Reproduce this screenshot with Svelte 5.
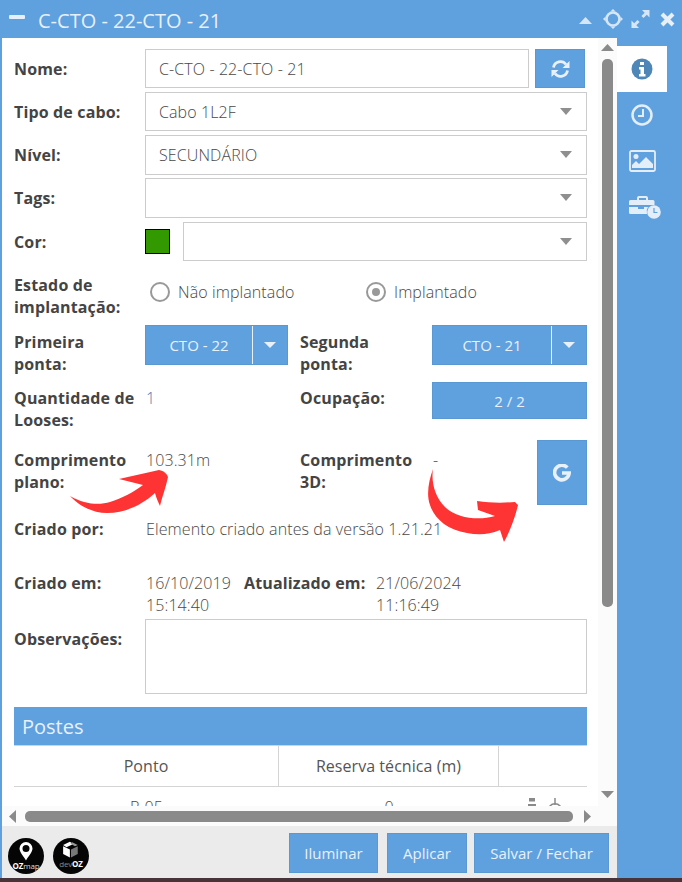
<script>
  const caret = 'M0 0h12l-6 7z';
</script>

<div class="window">
  <header class="titlebar">
    <span class="minus"></span>
    <h1>C-CTO - 22-CTO - 21</h1>
    <div class="tools">
      <svg class="t-up" width="13" height="7" viewBox="0 0 13 7"><path d="M6.500 0L13 7H0z" fill="#d5e6f7"/></svg>
      <svg class="t-move" width="20" height="20" viewBox="0 0 20 20" fill="none" stroke="#d5e6f7" stroke-width="2.600"><circle cx="10" cy="10" r="6.500"/><path d="M10 0l2.600 2.600H7.400zM10 20l2.600-2.600H7.400zM0 10l2.600-2.600v5.200zM20 10l-2.600-2.600v5.200z" fill="#d5e6f7" stroke="none"/></svg>
      <svg class="t-exp" width="19" height="18" viewBox="0 0 18 18" fill="#d5e6f7"><path d="M10.500 0H18v7.500l-2.700-2.700-3.300 3.300-2.100-2.100 3.300-3.300zM0 18v-7.500l2.700 2.700 3.300-3.300 2.100 2.100-3.300 3.300L7.500 18z"/></svg>
      <svg class="t-x" width="15" height="15" viewBox="0 0 15 15" fill="none" stroke="#e6f0fa" stroke-width="4"><path d="M2 2l11 11M13 2L2 13"/></svg>
    </div>
  </header>

  <div class="main">
    <div class="panel">
      <div class="scroller">
        <div class="row">
          <span class="label">Nome:</span>
          <div class="field name">C-CTO - 22-CTO - 21</div>
          <button class="btn refresh" aria-label="Atualizar">
            <svg width="19" height="18" viewBox="0 0 19 18" fill="none" stroke="#e8f1fa" stroke-width="2.800"><path d="M2.500 7.500A7 7 0 0 1 15 4.500"/><path d="M16.500 10.500A7 7 0 0 1 4 13.500"/><path d="M18.500 1v7h-7zM.5 17v-7h7z" fill="#e8f1fa" stroke="none"/></svg>
          </button>
        </div>
        <div class="row"><span class="label">Tipo de cabo:</span><div class="field select">Cabo 1L2F<svg class="caret" width="12" height="7"><path d={caret}/></svg></div></div>
        <div class="row nivel"><span class="label">Nível:</span><div class="field select tall">SECUNDÁRIO<svg class="caret" width="12" height="7"><path d={caret}/></svg></div></div>
        <div class="row"><span class="label">Tags:</span><div class="field select tall"><svg class="caret" width="12" height="7"><path d={caret}/></svg></div></div>
        <div class="row"><span class="label">Cor:</span><span class="swatch"></span><div class="field select"><svg class="caret" width="12" height="7"><path d={caret}/></svg></div></div>

        <div class="state">
          <span class="label">Estado de<br>implantação:</span>
          <div class="radios">
            <span class="radio"><i></i>Não implantado</span>
            <span class="radio on"><i></i>Implantado</span>
          </div>
        </div>

        <div class="pair first">
          <span class="label">Primeira<br>ponta:</span>
          <div class="split a"><span>CTO - 22</span><b><svg width="12" height="6"><path d="M0 0h12l-6 6z" fill="#e8f1fa"/></svg></b></div>
          <span class="label second">Segunda<br>ponta:</span>
          <div class="split b"><span>CTO - 21</span><b><svg width="12" height="6"><path d="M0 0h12l-6 6z" fill="#e8f1fa"/></svg></b></div>
        </div>

        <div class="pair qty">
          <span class="label">Quantidade de<br>Looses:</span>
          <span class="value">1</span>
          <span class="label second">Ocupação:</span>
          <div class="occ">2 / 2</div>
        </div>

        <div class="pair len">
          <span class="label">Comprimento<br>plano:</span>
          <span class="value">103.31m</span>
          <span class="label second">Comprimento<br>3D:</span>
          <span class="value dash">-</span>
          <button class="btn g" aria-label="Google">
            <svg width="18" height="18" viewBox="0 0 18 18" fill="none" stroke="#e8f1fa" stroke-width="3.600"><path d="M14.300 3.600A7.300 7.300 0 1 0 16.200 9H9"/></svg>
          </button>
        </div>

        <div class="by"><span class="label">Criado por:</span><span class="value">Elemento criado antes da versão 1.21.21</span></div>

        <div class="dates">
          <span class="label">Criado em:</span>
          <span class="value d1">16/10/2019<br>15:14:40</span>
          <span class="label up">Atualizado em:</span>
          <span class="value d2">21/06/2024<br>11:16:49</span>
        </div>

        <div class="obs"><span class="label">Observações:</span><div class="field area"></div></div>

        <section class="postes">
          <h2>Postes</h2>
          <div class="thead"><span>Ponto</span><span>Reserva técnica (m)</span><span></span></div>
          <div class="tbody">
            <span>P-05</span><span>0</span>
            <span class="acts">
              <svg width="8" height="10" viewBox="0 0 8 10" fill="#8a8a8a"><path d="M1 0h6v3.500H1zM0 6h8v4H0z"/></svg>
              <svg width="16" height="12" viewBox="0 0 16 12" fill="none" stroke="#8a8a8a" stroke-width="1.500"><circle cx="8" cy="13" r="7.200"/><path d="M8 0v7"/></svg>
            </span>
          </div>
        </section>
      </div>

      <svg class="arrows" width="615" height="788" viewBox="2 38 615 788">
        <path fill="#fe3333" d="M70 496C85 505 100 505 110 502C122 498 134 492 143 485L119 479C132 476 146 473 159 470C164 471 167 474 168 477C166 487 162 497 160 506C158 502 156 497 155 493C142 505 125 513 107 513C92 513 78 505 70 496Z"/>
        <path fill="#fe3333" d="M433 469C431 482 435 497 445 507C456 518 478 521 495 516L478 510L477 501C490 503 503 503 515 502L518 505C515 518 510 531 504 542L500 530C488 535 478 535 467 533C447 530 434 518 430 505C426 494 429 480 433 469Z"/>
      </svg>

      <div class="vbar">
        <svg width="13" height="7"><path d="M6.500 0L13 7H0z" fill="#8a8a8a"/></svg>
        <span class="thumb"></span>
        <svg width="13" height="7"><path d="M0 0h13L6.500 7z" fill="#8a8a8a"/></svg>
      </div>
      <div class="hbar">
        <svg width="7" height="13"><path d="M7 0v13L0 6.500z" fill="#8a8a8a"/></svg>
        <span class="thumb"></span>
        <svg width="7" height="13"><path d="M0 0v13l7-6.500z" fill="#8a8a8a"/></svg>
      </div>
    </div>

    <nav class="side">
      <div class="tab active">
        <svg width="22" height="22" viewBox="0 0 22 22"><circle cx="11" cy="11" r="10.500" fill="#4f86b8"/><path d="M9 4h4v3H9zM8 9h5v7h1.500v2.500h-6.500V16H9.500v-4.500H8z" fill="#fff"/></svg>
      </div>
      <div class="tab">
        <svg width="22" height="22" viewBox="0 0 22 22" fill="none" stroke="#e4eef9"><circle cx="11" cy="11" r="9.500" stroke-width="2.500"/><path d="M12 5v7H7" stroke-width="2"/></svg>
      </div>
      <div class="tab">
        <svg width="27" height="22" viewBox="0 0 27 22"><rect x="1" y="1" width="25" height="20" rx="1.500" fill="none" stroke="#e4eef9" stroke-width="1.800"/><circle cx="7" cy="6.500" r="2.500" fill="#e4eef9"/><path d="M3 18v-3l4-4 3 3 7-7 7 7v4z" fill="#e4eef9"/></svg>
      </div>
      <div class="tab">
        <svg class="case" width="32" height="24" viewBox="0 0 32 24" fill="#e4eef9"><path d="M8 3a2 2 0 0 1 2-2h7a2 2 0 0 1 2 2v2h5a1.500 1.500 0 0 1 1.500 1.500V10H0V6.500A1.500 1.500 0 0 1 1.500 5H8zM10 3v2h7V3z"/><path d="M0 12h9v2h6v-2h4a8 8 0 0 0-1 7H1.500A1.500 1.500 0 0 1 0 17.500z"/><circle cx="25" cy="17" r="6.800"/><path d="M25 13v4.500h3.500" fill="none" stroke="#5fa0df" stroke-width="1.200"/></svg>
      </div>
    </nav>
  </div>

  <footer class="foot">
    <div class="logos">
      <div class="logo">
        <svg width="14" height="19" viewBox="0 0 14 19"><path fill-rule="evenodd" d="M7 0a6.500 6.500 0 0 1 6.500 6.500C13.500 10 9.500 14 7 18.500 4.500 14 .5 10 .5 6.500A6.500 6.500 0 0 1 7 0zm0 3a3.500 3.500 0 1 0 0 7 3.500 3.500 0 0 0 0-7z" fill="#fff"/></svg>
        <span>OZ<em class="light">map</em></span>
      </div>
      <div class="logo dev">
        <svg width="18" height="19" viewBox="0 0 16 16"><path d="M1 4l6-3 3 2-6 3z" fill="#fff"/><path d="M1 5l6 3v7L1 12z" fill="#fff"/><path d="M8 8l6-3v7l-6 3z" fill="#777"/><path d="M9 1.500l5 2.500-2.500 1.200-4-2.500z" fill="#999"/></svg>
        <span><em>dev</em>OZ</span>
      </div>
    </div>
    <div class="actions">
      <button class="btn a1">Iluminar</button>
      <button class="btn a2">Aplicar</button>
      <button class="btn a3">Salvar / Fechar</button>
    </div>
  </footer>
</div>

<style>
  :global(body) { margin: 0; background: #47343a; }
  .window { width: 682px; height: 878px; background: #5fa0df; display: flex; flex-direction: column; font-family: "Open Sans", sans-serif; font-size: 15px; color: #444; overflow: hidden; }
  .titlebar { height: 38px; flex: none; display: flex; align-items: center; padding: 0 7px 0 9px; color: #e6f0fa; }
  .minus { width: 16px; height: 4px; background: #e6f0fa; border-radius: 1px; margin-bottom: 4px; }
  h1 { font-size: 20px; font-weight: 400; margin: 0 0 0 13px; position: relative; top: 1px; }
  .tools { margin-left: auto; display: flex; align-items: center; }
  .t-up { margin-top: 3px; }
  .t-move { margin-left: 11px; margin-top: -1px; }
  .t-exp { margin-left: 8px; }
  .t-x { margin-left: 10px; }
  .main { flex: 1; display: flex; min-height: 0; padding-left: 2px; }
  .panel { width: 615px; position: relative; background: #fff; overflow: hidden; }
  .scroller { padding: 11px 0 0 12px; height: 777px; overflow: hidden; }
  .row { display: flex; align-items: center; width: 573px; margin-bottom: 4px; }
  .row.nivel { margin-bottom: 3px; }
  .label { font-weight: 700; font-size: 16px; line-height: 22px; letter-spacing: .15px; color: #444; width: 131px; flex: none; }
  .field { height: 39px; box-sizing: border-box; border: 1px solid #ccc; flex: 1; display: flex; align-items: center; padding-left: 13px; color: #484848; font-weight: 300; font-size: 16px; letter-spacing: .1px; position: relative; min-width: 0; }
  .field.tall { height: 40px; }
  .name { flex: none; width: 384px; }
  .caret { position: absolute; right: 14px; top: 15px; fill: #8f8f8f; }
  .swatch { width: 23px; height: 23px; border: 1px solid #000; background: #390; margin-right: 13px; flex: none; }
  .btn { border: 1px solid #5a98d4; background: #5fa0df; color: #e8f1fa; font-family: inherit; font-size: 15px; padding: 0; display: flex; align-items: center; justify-content: center; }
  .refresh { width: 50px; height: 39px; margin-left: 6px; }
  .state { display: flex; margin-top: 13px; height: 48px; width: 573px; }
  .radios { display: flex; padding-left: 5px; padding-top: 7px; }
  .radio { display: flex; align-items: center; height: 22px; font-weight: 300; font-size: 16px; letter-spacing: .1px; color: #484848; width: 216px; }
  .radio i { width: 16px; height: 16px; border: 2px solid #999; border-radius: 50%; margin-right: 8px; position: relative; flex: none; }
  .radio.on i::after { content: ""; position: absolute; left: 4px; top: 4px; width: 8px; height: 8px; border-radius: 50%; background: #999; }
  .pair { display: flex; width: 573px; position: relative; }
  .pair .second { width: 132px; margin-left: 12px; }
  .first { margin-top: 3px; height: 57px; }
  .first .label { padding-top: 6px; box-sizing: border-box; height: 57px; }
  .split { height: 40px; background: #5fa0df; border: 1px solid #5a98d4; box-sizing: border-box; display: flex; color: #e8f1fa; font-size: 15px; }
  .split.a { width: 143px; }
  .split.b { width: 155px; }
  .split span { flex: 1; display: flex; align-items: center; justify-content: center; }
  .split b { width: 34px; border-left: 1px solid #e8f1fa; display: flex; align-items: center; justify-content: center; }
  .value { font-weight: 300; font-size: 16px; line-height: 22px; letter-spacing: .1px; color: #484848; }
  .qty { height: 58px; }
  .qty .label { padding-top: 5px; }
  .qty .value { width: 143px; padding: 5px 0 0 1px; box-sizing: border-box; color: #3f78ad; }
  .occ { width: 155px; height: 37px; box-sizing: border-box; background: #5fa0df; border: 1px solid #5a98d4; color: #e8f1fa; display: flex; align-items: center; justify-content: center; font-size: 15px; }
  .len { height: 65px; }
  .len .label { padding-top: 9px; }
  .len .value { width: 143px; padding: 9px 0 0 1px; box-sizing: border-box; }
  .len .dash { width: 105px; }
  .g { width: 50px; height: 65px; }
  .by { display: flex; margin-top: 13px; height: 22px; }
  .by .value { padding-left: 1px; }
  .dates { display: flex; margin-top: 32px; height: 44px; }
  .d1 { width: 98px; margin-left: 1px; }
  .dates .up { width: 132px; }
  .d2 { width: 100px; }
  .obs { display: flex; margin-top: 3px; width: 573px; }
  .obs .label { padding-top: 9px; }
  .area { height: 75px; }
  .postes { width: 573px; margin-top: 13px; }
  h2 { background: #5fa0df; color: #e8f1fa; height: 38px; margin: 0; font-size: 20px; font-weight: 400; line-height: 39px; padding-left: 8px; }
  .thead { display: grid; grid-template-columns: 265px 220px 1fr; height: 42px; border-bottom: 1px solid #d4d4d4; border-top: 1px solid #d4d4d4; box-sizing: border-box; }
  .thead span { display: flex; align-items: center; justify-content: center; font-weight: 400; font-size: 16px; letter-spacing: .05px; color: #555; border-right: 1px solid #d4d4d4; }
  .thead span:last-child { border-right: 0; }
  .tbody { display: grid; grid-template-columns: 265px 220px 1fr; padding-top: 9px; font-weight: 300; font-size: 16px; line-height: 22px; color: #484848; text-align: center; }
  .acts { display: flex; justify-content: flex-end; align-items: flex-start; gap: 11px; padding-right: 24px; margin-top: 2px; }
  .arrows { position: absolute; left: 0; top: 0; pointer-events: none; }
  .vbar { position: absolute; right: 0; top: 0; width: 19px; height: 768px; background: #fbfbfb; display: flex; flex-direction: column; align-items: center; padding-top: 6px; box-sizing: border-box; }
  .vbar .thumb { width: 11px; height: 548px; border-radius: 5px; background: #8a8a8a; margin: 8px 0 184px; flex: none; }
  .hbar { position: absolute; left: 0; right: 0; bottom: 0; height: 20px; background: #fbfbfb; display: flex; align-items: center; padding-left: 7px; }
  .hbar .thumb { width: 548px; height: 11px; border-radius: 5px; background: #8a8a8a; margin: 0 11px 0 9px; flex: none; }
  .side { width: 65px; flex: none; padding-top: 8px; }
  .tab { width: 50px; height: 46px; display: flex; align-items: center; justify-content: center; box-sizing: border-box; }
  .tab.active { background: #fff; }
  .case { margin-left: 6px; }
  .foot { height: 52px; flex: none; margin-left: 2px; width: 615px; background: #ebebeb; display: flex; justify-content: space-between; box-sizing: border-box; padding: 7px 8px 0 6px; }
  .logos { display: flex; gap: 9px; padding-top: 5px; }
  .logo { width: 36px; height: 36px; border-radius: 50%; background: #050505; display: flex; flex-direction: column; align-items: center; color: #fff; padding-top: 4px; box-sizing: border-box; }
  .logo span { font-size: 8px; font-weight: 700; line-height: 9px; letter-spacing: -.2px; white-space: nowrap; }
  .logo em { font-style: normal; font-weight: 400; color: #888; }
  .logo em.light { color: #ddd; }
  .dev { padding-top: 3px; }
  .dev svg { margin-top: -1px; }
  .actions { display: flex; }
  .actions .btn { height: 40px; font-size: 15px; }
  .a1 { width: 89px; }
  .a2 { width: 80px; margin-left: 9px; }
  .a3 { width: 135px; margin-left: 7px; }
</style>
